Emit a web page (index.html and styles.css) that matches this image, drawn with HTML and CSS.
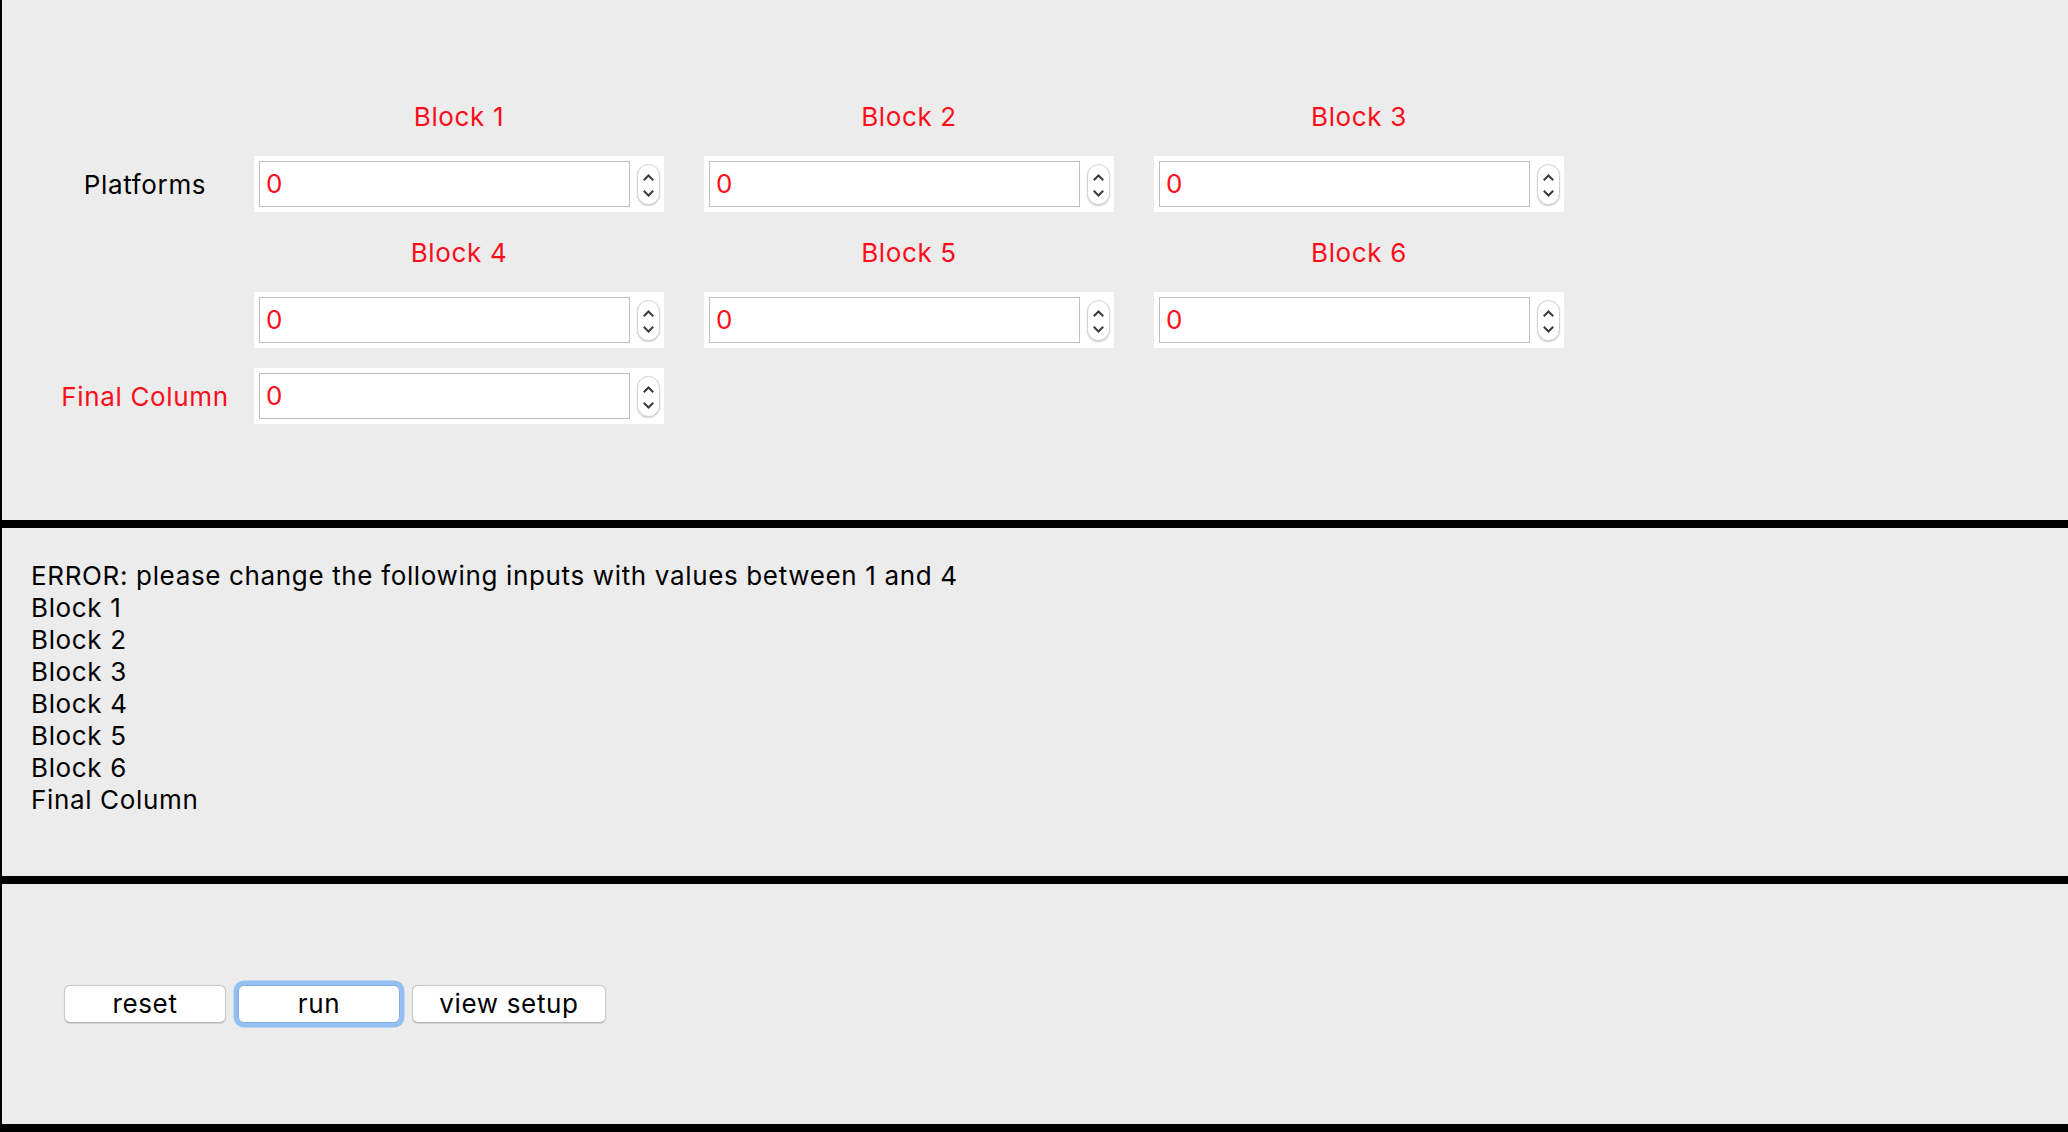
FILE: index.html
```html
<!DOCTYPE html>
<html lang="en">
<head>
<meta charset="utf-8">
<title>Blocks</title>
<link rel="stylesheet" href="styles.css">
</head>
<body>
<div class="app">
  <section class="panel inputs">
    <div class="row label-row">
      <div class="side"></div>
      <div class="block-label">Block 1</div>
      <div class="block-label">Block 2</div>
      <div class="block-label">Block 3</div>
    </div>
    <div class="row field-row gap-after-field">
      <div class="side">Platforms</div>
      <div class="spinbox"><div class="num">0</div><div class="spin"><svg viewBox="0 0 23 41" width="23" height="41"><path d="M7.5 15.5 L11.5 11.5 L15.5 15.5" /><path d="M7.5 27.5 L11.5 31.5 L15.5 27.5" /></svg></div></div>
      <div class="spinbox"><div class="num">0</div><div class="spin"><svg viewBox="0 0 23 41" width="23" height="41"><path d="M7.5 15.5 L11.5 11.5 L15.5 15.5" /><path d="M7.5 27.5 L11.5 31.5 L15.5 27.5" /></svg></div></div>
      <div class="spinbox"><div class="num">0</div><div class="spin"><svg viewBox="0 0 23 41" width="23" height="41"><path d="M7.5 15.5 L11.5 11.5 L15.5 15.5" /><path d="M7.5 27.5 L11.5 31.5 L15.5 27.5" /></svg></div></div>
    </div>
    <div class="row label-row">
      <div class="side"></div>
      <div class="block-label">Block 4</div>
      <div class="block-label">Block 5</div>
      <div class="block-label">Block 6</div>
    </div>
    <div class="row field-row gap-after-plain">
      <div class="side"></div>
      <div class="spinbox"><div class="num">0</div><div class="spin"><svg viewBox="0 0 23 41" width="23" height="41"><path d="M7.5 15.5 L11.5 11.5 L15.5 15.5" /><path d="M7.5 27.5 L11.5 31.5 L15.5 27.5" /></svg></div></div>
      <div class="spinbox"><div class="num">0</div><div class="spin"><svg viewBox="0 0 23 41" width="23" height="41"><path d="M7.5 15.5 L11.5 11.5 L15.5 15.5" /><path d="M7.5 27.5 L11.5 31.5 L15.5 27.5" /></svg></div></div>
      <div class="spinbox"><div class="num">0</div><div class="spin"><svg viewBox="0 0 23 41" width="23" height="41"><path d="M7.5 15.5 L11.5 11.5 L15.5 15.5" /><path d="M7.5 27.5 L11.5 31.5 L15.5 27.5" /></svg></div></div>
    </div>
    <div class="row field-row">
      <div class="side error-label">Final Column</div>
      <div class="spinbox"><div class="num">0</div><div class="spin"><svg viewBox="0 0 23 41" width="23" height="41"><path d="M7.5 15.5 L11.5 11.5 L15.5 15.5" /><path d="M7.5 27.5 L11.5 31.5 L15.5 27.5" /></svg></div></div>
    </div>
  </section>

  <section class="panel errors">
    <div class="msg">ERROR: please change the following inputs with values between 1 and 4</div>
    <div class="msg">Block 1</div>
    <div class="msg">Block 2</div>
    <div class="msg">Block 3</div>
    <div class="msg">Block 4</div>
    <div class="msg">Block 5</div>
    <div class="msg">Block 6</div>
    <div class="msg">Final Column</div>
  </section>

  <section class="panel actions">
    <button class="btn btn-reset" type="button">reset</button>
    <button class="btn btn-run" type="button">run</button>
    <button class="btn btn-setup" type="button">view setup</button>
  </section>
</div>
</body>
</html>
```

FILE: styles.css
```css
* {
  box-sizing: border-box;
}

html, body {
  margin: 0;
  padding: 0;
  background: #ececec;
}

body {
  font-family: Inter, "Liberation Sans", Arial, sans-serif;
  font-size: 26px;
  letter-spacing: 0.65px;
  color: #000;
  width: 2068px;
  height: 1132px;
  overflow: hidden;
}

.app {
  border-left: 2px solid #000;
  height: 1132px;
  display: flex;
  flex-direction: column;
}

.panel {
  background: #ececec;
  border-bottom: 8px solid #000;
}

/* ---------- inputs panel ---------- */
.inputs {
  height: 528px;
  padding-top: 101px;
}

.row {
  display: grid;
  grid-template-columns: 252px repeat(3, 450px);
  align-items: center;
}

.label-row {
  height: 32px;
  margin-bottom: 23px;
}

.block-label {
  width: 410px;
  text-align: center;
  color: #fc0d1b;
  line-height: 32px;
  white-space: nowrap;
}

.field-row {
  height: 56px;
}

.gap-after-field {
  margin-bottom: 25px;
}

.gap-after-plain {
  margin-bottom: 20px;
}

.side {
  padding-left: 34px;
  text-align: center;
  white-space: nowrap;
}

.error-label {
  color: #fc0d1b;
}

.spinbox {
  width: 410px;
  height: 56px;
  background: #fff;
  padding: 5px 4px 5px 5px;
  display: flex;
  align-items: center;
}

.num {
  width: 371px;
  height: 46px;
  border: 1px solid #bfbfbf;
  background: #fff;
  color: #fc0d1b;
  line-height: 44px;
  padding-left: 6px;
}

.spin {
  width: 23px;
  height: 41px;
  margin-left: 7px;
  border: 1px solid #d2d2d2;
  border-radius: 12px;
  background: #fff;
  box-shadow: 0 1px 1.5px rgba(0, 0, 0, 0.18);
  position: relative;
  overflow: hidden;
}

.spin svg {
  position: absolute;
  left: -1px;
  top: -1px;
}

.spin path {
  fill: none;
  stroke: #3a3a3a;
  stroke-width: 2;
  stroke-linecap: square;
}

/* ---------- errors panel ---------- */
.errors {
  height: 356px;
  padding: 32px 0 0 29px;
}

.msg {
  line-height: 32px;
  white-space: nowrap;
}

/* ---------- actions panel ---------- */
.actions {
  height: 248px;
  display: flex;
  align-items: center;
  gap: 12px;
  padding-left: 62px;
}

.btn {
  font-family: inherit;
  font-size: 26px;
  letter-spacing: 0.65px;
  color: #000;
  height: 38px;
  line-height: 36px;
  padding: 0;
  background: #fff;
  border: 1px solid #c9c9c9;
  border-bottom-color: #b5b5b5;
  border-radius: 6px;
  box-shadow: 0 0.5px 1px rgba(0, 0, 0, 0.12);
  text-align: center;
}

.btn-reset,
.btn-run {
  width: 162px;
}

.btn-setup {
  width: 194px;
}

.btn-run {
  border-color: #7fb0e8;
  box-shadow: 0 0 0 4.5px #93c0f0;
}
```
